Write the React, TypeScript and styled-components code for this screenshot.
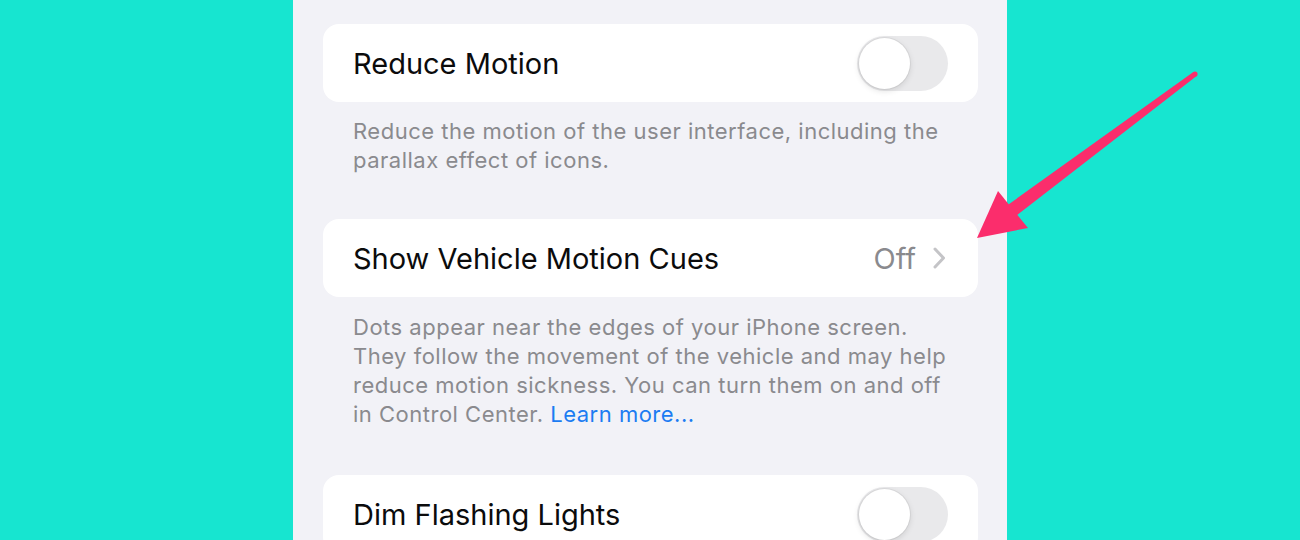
import styled, { createGlobalStyle } from "styled-components";

const GlobalStyle = createGlobalStyle`
  html, body {
    margin: 0;
    padding: 0;
    background: #17e5d0;
    overflow: hidden;
  }
  body {
    font-family: Inter, "Noto Sans", "Liberation Sans", sans-serif;
    -webkit-font-smoothing: antialiased;
  }
`;

function Toggle() {
  return (
    <StyledTrack>
      <StyledKnob />
    </StyledTrack>
  );
}

function Chevron() {
  return (
    <svg width="16" height="24" viewBox="0 0 16 24" fill="none">
      <polyline
        points="3,3 11.5,12 3,21"
        stroke="#c4c4c7"
        strokeWidth="3"
        strokeLinecap="round"
        strokeLinejoin="round"
      />
    </svg>
  );
}

function Arrow() {
  return (
    <StyledArrow width="1300" height="540" viewBox="0 0 1300 540">
      <circle cx="1195" cy="74" r="2.6" fill="#fb2d6c" />
      <polygon
        points="1193.4,71.9 1196.6,76.1 1016.5,215.5 1008.5,204.5"
        fill="#fb2d6c"
      />
      <polygon points="998,191 977,238 1028,228" fill="#fb2d6c" />
    </StyledArrow>
  );
}

function App() {
  return (
    <>
      <GlobalStyle />
      <StyledPage>
        <StyledPanel>
          <StyledCard>
            <StyledLabel>Reduce Motion</StyledLabel>
            <Toggle />
          </StyledCard>
          <StyledFooter $top={15} $bottom={45}>
            Reduce the motion of the user interface, including the parallax
            effect of icons.
          </StyledFooter>

          <StyledCard>
            <StyledLabel>Show Vehicle Motion Cues</StyledLabel>
            <StyledValue>
              Off
              <Chevron />
            </StyledValue>
          </StyledCard>
          <StyledFooter $top={16} $bottom={47}>
            Dots appear near the edges of your iPhone screen. They follow the
            movement of the vehicle and may help reduce motion sickness. You
            can turn them on and off in Control Center.{" "}
            <StyledLink>Learn more...</StyledLink>
          </StyledFooter>

          <StyledCard>
            <StyledLabel>Dim Flashing Lights</StyledLabel>
            <Toggle />
          </StyledCard>
        </StyledPanel>
        <Arrow />
      </StyledPage>
    </>
  );
}

const StyledPage = styled.div`
  position: relative;
  width: 1300px;
  height: 540px;
  display: flex;
  justify-content: center;
  overflow: hidden;
`;

const StyledPanel = styled.div`
  width: 714px;
  box-sizing: border-box;
  padding: 24px 29px 0 30px;
  background: #f2f2f7;
  display: flex;
  flex-direction: column;
`;

const StyledCard = styled.div`
  height: 78px;
  flex-shrink: 0;
  box-sizing: border-box;
  background: #ffffff;
  border-radius: 16px;
  padding: 0 30px 0 30px;
  display: flex;
  align-items: center;
  justify-content: space-between;
`;

const StyledLabel = styled.div`
  font-size: 29px;
  color: #0b0b0c;
`;

const StyledValue = styled.div`
  display: flex;
  align-items: center;
  gap: 16px;
  font-size: 29px;
  color: #8a8a8e;
`;

const StyledFooter = styled.div<{ $top: number; $bottom: number }>`
  margin: ${(p) => p.$top}px 0 ${(p) => p.$bottom}px;
  padding: 0 30px;
  font-size: 22px;
  letter-spacing: 0.5px;
  line-height: 28.7px;
  color: #8a8a8e;
`;

const StyledLink = styled.span`
  color: #1c7cf2;
`;

const StyledTrack = styled.div`
  width: 91px;
  height: 55px;
  border-radius: 28px;
  background: #e9e9eb;
  padding: 2px;
  box-sizing: border-box;
  display: flex;
  align-items: center;
`;

const StyledKnob = styled.div`
  width: 51px;
  height: 51px;
  border-radius: 50%;
  background: #ffffff;
  box-shadow: 0 2px 6px rgba(0, 0, 0, 0.12), 0 0 0 1px rgba(0, 0, 0, 0.05);
`;

const StyledArrow = styled.svg`
  position: absolute;
  left: 0;
  top: 0;
  pointer-events: none;
`;

export default App;
